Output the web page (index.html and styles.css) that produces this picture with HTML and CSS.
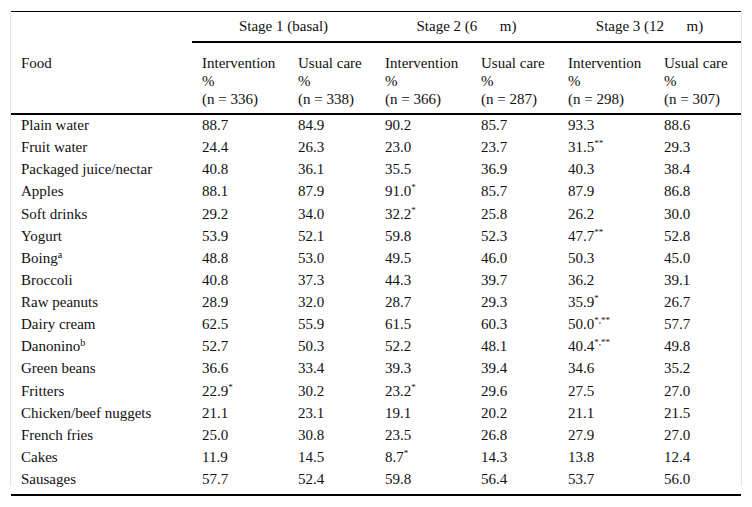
FILE: index.html
```html
<!DOCTYPE html>
<html>
<head>
<meta charset="utf-8">
<link rel="stylesheet" href="styles.css">
</head>
<body>
<div class="frame">
<table class="data">
<colgroup>
<col class="c-food"><col class="c-int"><col class="c-usu"><col class="c-int"><col class="c-usu"><col class="c-int"><col class="c-usu">
</colgroup>
<thead>
<tr class="stage-row">
<th rowspan="2" class="food-head">Food</th>
<th colspan="2" class="stage">Stage 1 (basal)</th>
<th colspan="2" class="stage">Stage 2 (6&nbsp;&nbsp;&nbsp;&nbsp;&nbsp;&nbsp;m)</th>
<th colspan="2" class="stage">Stage 3 (12&nbsp;&nbsp;&nbsp;&nbsp;&nbsp;&nbsp;m)</th>
</tr>
<tr class="group-row">
<th>Intervention<br>%<br>(n = 336)</th>
<th>Usual care<br>%<br>(n = 338)</th>
<th>Intervention<br>%<br>(n = 366)</th>
<th>Usual care<br>%<br>(n = 287)</th>
<th>Intervention<br>%<br>(n = 298)</th>
<th>Usual care<br>%<br>(n = 307)</th>
</tr>
</thead>
<tbody>
<tr><td>Plain water</td><td>88.7</td><td>84.9</td><td>90.2</td><td>85.7</td><td>93.3</td><td>88.6</td></tr>
<tr><td>Fruit water</td><td>24.4</td><td>26.3</td><td>23.0</td><td>23.7</td><td>31.5<sup>**</sup></td><td>29.3</td></tr>
<tr><td>Packaged juice/nectar</td><td>40.8</td><td>36.1</td><td>35.5</td><td>36.9</td><td>40.3</td><td>38.4</td></tr>
<tr><td>Apples</td><td>88.1</td><td>87.9</td><td>91.0<sup>*</sup></td><td>85.7</td><td>87.9</td><td>86.8</td></tr>
<tr><td>Soft drinks</td><td>29.2</td><td>34.0</td><td>32.2<sup>*</sup></td><td>25.8</td><td>26.2</td><td>30.0</td></tr>
<tr><td>Yogurt</td><td>53.9</td><td>52.1</td><td>59.8</td><td>52.3</td><td>47.7<sup>**</sup></td><td>52.8</td></tr>
<tr><td>Boing<sup class="ltr">a</sup></td><td>48.8</td><td>53.0</td><td>49.5</td><td>46.0</td><td>50.3</td><td>45.0</td></tr>
<tr><td>Broccoli</td><td>40.8</td><td>37.3</td><td>44.3</td><td>39.7</td><td>36.2</td><td>39.1</td></tr>
<tr><td>Raw peanuts</td><td>28.9</td><td>32.0</td><td>28.7</td><td>29.3</td><td>35.9<sup>*</sup></td><td>26.7</td></tr>
<tr><td>Dairy cream</td><td>62.5</td><td>55.9</td><td>61.5</td><td>60.3</td><td>50.0<sup>*,**</sup></td><td>57.7</td></tr>
<tr><td>Danonino<sup class="ltr">b</sup></td><td>52.7</td><td>50.3</td><td>52.2</td><td>48.1</td><td>40.4<sup>*,**</sup></td><td>49.8</td></tr>
<tr><td>Green beans</td><td>36.6</td><td>33.4</td><td>39.3</td><td>39.4</td><td>34.6</td><td>35.2</td></tr>
<tr><td>Fritters</td><td>22.9<sup>*</sup></td><td>30.2</td><td>23.2<sup>*</sup></td><td>29.6</td><td>27.5</td><td>27.0</td></tr>
<tr><td>Chicken/beef nuggets</td><td>21.1</td><td>23.1</td><td>19.1</td><td>20.2</td><td>21.1</td><td>21.5</td></tr>
<tr><td>French fries</td><td>25.0</td><td>30.8</td><td>23.5</td><td>26.8</td><td>27.9</td><td>27.0</td></tr>
<tr><td>Cakes</td><td>11.9</td><td>14.5</td><td>8.7<sup>*</sup></td><td>14.3</td><td>13.8</td><td>12.4</td></tr>
<tr class="last"><td>Sausages</td><td>57.7</td><td>52.4</td><td>59.8</td><td>56.4</td><td>53.7</td><td>56.0</td></tr>
</tbody>
</table>
<div class="rule"></div>
</div>
</body>
</html>
```
FILE: styles.css
```css
html, body {
  margin: 0;
  padding: 0;
  background: #ffffff;
}

body {
  font-family: "Liberation Serif", "Times New Roman", serif;
  font-size: 15px;
  color: #111111;
}

.frame {
  position: relative;
  margin: 11px 0 0 10px;
  width: 732px;
  padding-left: 1px;
  box-sizing: border-box;
}

.frame::before,
.frame::after {
  content: "";
  position: absolute;
  top: 0;
  bottom: 10px;
  width: 1px;
  background: #e4e4e4;
}

.frame::before { left: 0; }
.frame::after { right: 0; }

.data {
  width: 730px;
  border-collapse: collapse;
  table-layout: fixed;
  border-top: 1px solid #000;
}

.rule {
  width: 730px;
  height: 2px;
  background: #000;
}

.c-food { width: 181px; }
.c-int { width: 96px; }
.c-usu { width: 87px; }

th {
  font-weight: normal;
  text-align: left;
  padding: 0 0 0 10px;
}

.stage {
  text-align: center;
  padding: 6px 0 6px 0;
  line-height: 17px;
  border-bottom: 2px solid #000;
}

.food-head {
  vertical-align: middle;
  padding-top: 2px;
}

.group-row th {
  line-height: 18px;
  padding-top: 11px;
  padding-bottom: 5px;
  vertical-align: top;
}

thead {
  border-bottom: 2px solid #000;
}

td {
  padding: 1px 0 3.125px 10px;
  line-height: 18px;
  white-space: nowrap;
}

tr.last td {
  padding-bottom: 6px;
}

sup {
  font-size: 9px;
  line-height: 0;
  vertical-align: 6px;
}

sup.ltr {
  font-size: 10px;
  vertical-align: 5px;
}
```
